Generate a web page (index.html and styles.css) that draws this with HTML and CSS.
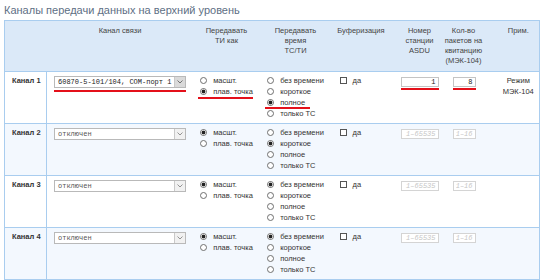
FILE: index.html
```html
<!DOCTYPE html>
<html lang="ru">

<head>
    <meta charset="UTF-8">
    <meta name="viewport" content="width=device-width, initial-scale=1.0">
    <title>Каналы передачи данных</title>
    <link rel="stylesheet" href="styles.css">
</head>

<body>
    <div class="page">
        <h1 class="title">Каналы передачи данных на верхний уровень</h1>
        <table class="channels">
            <colgroup>
                <col class="c-name">
                <col class="c-link">
                <col class="c-ti">
                <col class="c-time">
                <col class="c-buf">
                <col class="c-asdu">
                <col class="c-pack">
                <col class="c-note">
            </colgroup>
            <thead>
                <tr>
                    <th></th>
                    <th>Канал связи</th>
                    <th>Передавать<br>ТИ как</th>
                    <th>Передавать<br>время<br>ТС/ТИ</th>
                    <th>Буферизация</th>
                    <th>Номер<br>станции<br>ASDU</th>
                    <th><div class="wide">Кол-во<br>пакетов на<br>квитанцию<br>(МЭК-104)</div></th>
                    <th class="note">Прим.</th>
                </tr>
            </thead>
            <tbody>
                <!-- Канал 1 -->
                <tr>
                    <td class="name">Канал 1</td>
                    <td class="link">
                        <span class="mark mark-select">
                            <span class="select active">
                                <span class="select-value">60870-5-101/104, COM-порт 1</span>
                                <span class="select-arrow"><svg width="6" height="4" viewBox="0 0 6 4"><path d="M0.5 0.5 L3 3 L5.5 0.5" fill="none" stroke="#666" stroke-width="0.9"/></svg></span>
                            </span>
                        </span>
                    </td>
                    <td class="opts">
                        <div class="group">
                            <label class="opt"><input type="radio" name="ti1">масшт.</label>
                            <label class="opt"><span class="mark mark-opt"><input type="radio" name="ti1" checked>плав. точка</span></label>
                        </div>
                    </td>
                    <td class="opts">
                        <div class="group">
                            <label class="opt"><input type="radio" name="t1">без времени</label>
                            <label class="opt"><input type="radio" name="t1">короткое</label>
                            <label class="opt"><span class="mark mark-time"><input type="radio" name="t1" checked>полное</span></label>
                            <label class="opt"><input type="radio" name="t1">только ТС</label>
                        </div>
                    </td>
                    <td class="buf"><label class="opt"><input type="checkbox">да</label></td>
                    <td class="num-cell"><span class="mark mark-num"><input class="num" type="text" value="1"></span></td>
                    <td class="num-cell"><span class="mark mark-num"><input class="num short" type="text" value="8"></span></td>
                    <td class="note">Режим<br>МЭК-104</td>
                </tr>
                <!-- Канал 2 -->
                <tr>
                    <td class="name">Канал 2</td>
                    <td class="link">
                        <span class="select">
                            <span class="select-value off">отключен</span>
                            <span class="select-arrow"><svg width="6" height="4" viewBox="0 0 6 4"><path d="M0.5 0.5 L3 3 L5.5 0.5" fill="none" stroke="#888" stroke-width="0.9"/></svg></span>
                        </span>
                    </td>
                    <td class="opts">
                        <div class="group">
                            <label class="opt"><input type="radio" name="ti2" checked>масшт.</label>
                            <label class="opt"><input type="radio" name="ti2">плав. точка</label>
                        </div>
                    </td>
                    <td class="opts">
                        <div class="group">
                            <label class="opt"><input type="radio" name="t2">без времени</label>
                            <label class="opt"><input type="radio" name="t2" checked>короткое</label>
                            <label class="opt"><input type="radio" name="t2">полное</label>
                            <label class="opt"><input type="radio" name="t2">только ТС</label>
                        </div>
                    </td>
                    <td class="buf"><label class="opt"><input type="checkbox">да</label></td>
                    <td class="num-cell"><input class="num" type="text" placeholder="1–65535" disabled></td>
                    <td class="num-cell"><input class="num short" type="text" placeholder="1–16" disabled></td>
                    <td class="note"></td>
                </tr>
                <!-- Канал 3 -->
                <tr>
                    <td class="name">Канал 3</td>
                    <td class="link">
                        <span class="select">
                            <span class="select-value off">отключен</span>
                            <span class="select-arrow"><svg width="6" height="4" viewBox="0 0 6 4"><path d="M0.5 0.5 L3 3 L5.5 0.5" fill="none" stroke="#888" stroke-width="0.9"/></svg></span>
                        </span>
                    </td>
                    <td class="opts">
                        <div class="group">
                            <label class="opt"><input type="radio" name="ti3" checked>масшт.</label>
                            <label class="opt"><input type="radio" name="ti3">плав. точка</label>
                        </div>
                    </td>
                    <td class="opts">
                        <div class="group">
                            <label class="opt"><input type="radio" name="t3" checked>без времени</label>
                            <label class="opt"><input type="radio" name="t3">короткое</label>
                            <label class="opt"><input type="radio" name="t3">полное</label>
                            <label class="opt"><input type="radio" name="t3">только ТС</label>
                        </div>
                    </td>
                    <td class="buf"><label class="opt"><input type="checkbox">да</label></td>
                    <td class="num-cell"><input class="num" type="text" placeholder="1–65535" disabled></td>
                    <td class="num-cell"><input class="num short" type="text" placeholder="1–16" disabled></td>
                    <td class="note"></td>
                </tr>
                <!-- Канал 4 -->
                <tr>
                    <td class="name">Канал 4</td>
                    <td class="link">
                        <span class="select">
                            <span class="select-value off">отключен</span>
                            <span class="select-arrow"><svg width="6" height="4" viewBox="0 0 6 4"><path d="M0.5 0.5 L3 3 L5.5 0.5" fill="none" stroke="#888" stroke-width="0.9"/></svg></span>
                        </span>
                    </td>
                    <td class="opts">
                        <div class="group">
                            <label class="opt"><input type="radio" name="ti4" checked>масшт.</label>
                            <label class="opt"><input type="radio" name="ti4">плав. точка</label>
                        </div>
                    </td>
                    <td class="opts">
                        <div class="group">
                            <label class="opt"><input type="radio" name="t4" checked>без времени</label>
                            <label class="opt"><input type="radio" name="t4">короткое</label>
                            <label class="opt"><input type="radio" name="t4">полное</label>
                            <label class="opt"><input type="radio" name="t4">только ТС</label>
                        </div>
                    </td>
                    <td class="buf"><label class="opt"><input type="checkbox">да</label></td>
                    <td class="num-cell"><input class="num" type="text" placeholder="1–65535" disabled></td>
                    <td class="num-cell"><input class="num short" type="text" placeholder="1–16" disabled></td>
                    <td class="note"></td>
                </tr>
            </tbody>
        </table>
    </div>
</body>

</html>
```

FILE: styles.css
```css
:root {
    --border-color: #a9cdef;
    --head-color: #dbe9f8;
    --alt-row-color: #f3f8fe;
    --title-color: #5e6f84;
    --text-color: #333;
    --mark-color: #e4101a;
    --font-family: 'Liberation Sans', Arial, sans-serif;
    --mono-family: 'Liberation Mono', 'Courier New', monospace;
}

body {
    margin: 0;
    padding: 0;
    font-family: var(--font-family);
    color: var(--text-color);
    background-color: #fff;
}

.page {
    padding: 3px 4px;
}

.title {
    margin: 0 0 3px;
    font-size: 11px;
    line-height: 14px;
    font-weight: normal;
    color: var(--title-color);
}

.channels {
    width: 535px;
    table-layout: fixed;
    border-collapse: collapse;
    border: 1px solid var(--border-color);
    font-size: 7.5px;
}

.c-name { width: 42px; }
.c-link { width: 147px; }
.c-ti { width: 66px; }
.c-time { width: 72px; }
.c-buf { width: 59px; }
.c-asdu { width: 58px; }
.c-pack { width: 30px; }
.c-note { width: 61px; }

.channels th {
    height: 45px;
    padding: 5px 1px 0;
    background-color: var(--head-color);
    font-weight: normal;
    line-height: 10px;
    vertical-align: top;
    text-align: center;
    color: #444;
}

.channels th .wide {
    margin: 0 -10px;
}

.channels td {
    padding: 3px 4px 4px;
    border-top: 1px solid var(--border-color);
    line-height: 11px;
    vertical-align: top;
}

.channels tbody tr:nth-child(even) td {
    background-color: var(--alt-row-color);
}

.channels .note {
    padding-left: 19px;
    padding-right: 0;
    text-align: center;
}

td.name {
    padding-left: 7px;
    border-right: 1px solid var(--border-color);
    font-weight: bold;
}

td.link {
    padding-left: 7px;
}

/* select */
.select {
    display: inline-flex;
    width: 132px;
    height: 12px;
    margin-top: 1px;
    box-sizing: border-box;
    border: 1px solid #b9b9b9;
    background-color: #fff;
    vertical-align: top;
}

.select-value {
    flex: 1;
    padding-left: 3px;
    font-family: var(--mono-family);
    font-size: 7px;
    line-height: 10px;
    color: #222;
    white-space: nowrap;
    overflow: hidden;
}

.select-value.off {
    color: #555;
}

.select-arrow {
    display: flex;
    align-items: center;
    justify-content: center;
    width: 10px;
    border-left: 1px solid #c9c9c9;
    background-color: #f1f1f1;
}

.select.active .select-arrow {
    background-color: #dadada;
}

/* options */
td.opts {
    text-align: center;
}

.group {
    display: inline-block;
    text-align: left;
}

.opt {
    display: block;
    white-space: nowrap;
}

.opt input {
    margin: 0 6px 0 0;
}

input[type="radio"],
input[type="checkbox"] {
    -webkit-appearance: none;
    appearance: none;
    width: 7px;
    height: 7px;
    box-sizing: border-box;
    border: 1px solid #6f6f6f;
    background-color: #fff;
    vertical-align: -1px;
}

input[type="radio"] {
    border-radius: 50%;
}

input[type="radio"]:checked {
    background: radial-gradient(circle, #222 0 1.6px, #fff 2.2px);
}

input[type="checkbox"] {
    border-color: #555;
}

td.buf {
    padding-left: 8px;
}

/* number fields */
td.num-cell {
    text-align: center;
}

.num {
    width: 38px;
    height: 10px;
    margin: 2px 0 0;
    padding: 0 2px;
    box-sizing: border-box;
    border: 1px solid #c4c4c4;
    background-color: #fff;
    font-family: var(--mono-family);
    font-size: 7px;
    text-align: right;
    color: #222;
    vertical-align: top;
}

.num.short {
    width: 23px;
}

.num:disabled {
    border-color: #d4d4d4;
    background-color: #fff;
}

.num::placeholder {
    color: #c6c6c6;
    font-style: italic;
}

/* red underline marks */
.mark {
    position: relative;
    display: inline-block;
}

.mark::after {
    content: "";
    position: absolute;
    left: 0;
    right: 0;
    bottom: -3px;
    height: 2px;
    background-color: var(--mark-color);
}

.mark-select {
    vertical-align: top;
}

.mark-select::after {
    bottom: -4px;
}

.mark-opt::after {
    left: -2px;
    bottom: -2px;
}

.mark-time::after {
    left: -2px;
    right: -5px;
    bottom: -1px;
}

.mark-num {
    vertical-align: top;
}

.mark-num::after {
    bottom: -3px;
}
```
